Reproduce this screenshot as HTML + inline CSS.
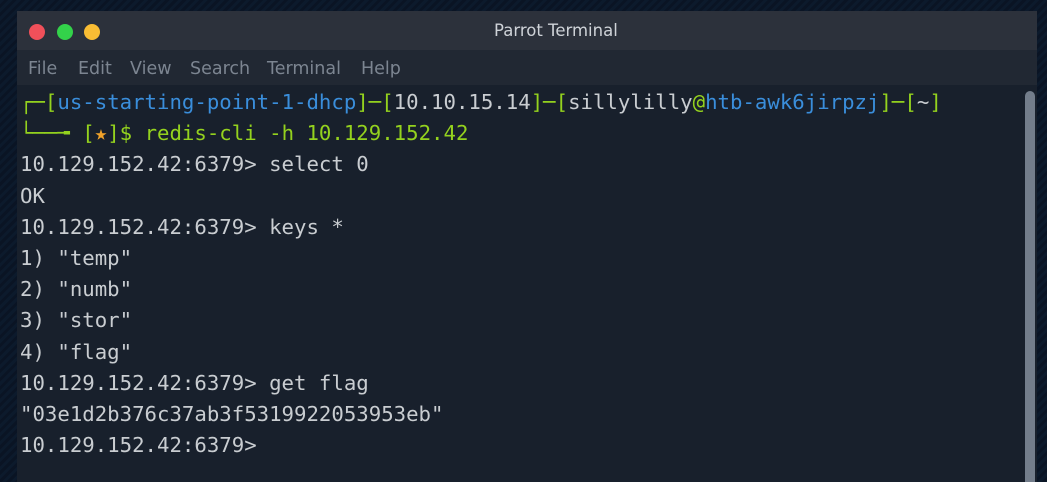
<!DOCTYPE html>
<html><head><meta charset="utf-8"><style>
html,body{margin:0;padding:0;width:1047px;height:482px;overflow:hidden;background:#0b1626;}
body{background:repeating-linear-gradient(135deg,#0c1a2c 0 3px,#0a1424 3px 6px);position:relative;}
.win{position:absolute;left:17px;top:11px;width:1020px;height:471px;background:#18202c;overflow:hidden;}
.title{height:39px;background:#2c313b;position:relative;}
.title span{position:absolute;left:477px;top:10px;color:#cfd3d8;font:16.5px "DejaVu Sans","Liberation Sans",sans-serif;}
.dot{position:absolute;top:13px;width:16px;height:16px;border-radius:50%;}
.menu{height:35px;background:#212833;color:#7c8591;font:17.5px "DejaVu Sans","Liberation Sans",sans-serif;position:relative;}
.menu span{position:absolute;top:9px;}
.term{position:absolute;left:3px;top:76px;font:20.7px "DejaVu Sans Mono","Liberation Mono",monospace;color:#c9cdd1;line-height:31.2px;white-space:pre;}
.g{color:#94d21e}.b{color:#3a8edb}.o{color:#f0a22a}
.sb{position:absolute;left:1008px;top:80px;width:10px;height:391px;background:#737d8b;border-radius:5px 5px 0 0;}
</style></head><body>
<div class="win">
<div class="title"><div class="dot" style="left:12px;background:#f0505a"></div><div class="dot" style="left:40px;background:#33d24a"></div><div class="dot" style="left:67px;background:#f9bd34"></div><span>Parrot Terminal</span></div>
<div class="menu"><span style="left:11px">File</span><span style="left:61px">Edit</span><span style="left:113px">View</span><span style="left:173px">Search</span><span style="left:250px">Terminal</span><span style="left:344px">Help</span></div>
<div class="term"><span class="g">┌─[</span><span class="b">us-starting-point-1-dhcp</span><span class="g">]─[</span>10.10.15.14<span class="g">]─[</span>sillylilly<span class="g">@</span><span class="b">htb-awk6jirpzj</span><span class="g">]─[</span>~<span class="g">]</span>
<span class="g">└──╼ [</span><span class="o">★</span><span class="g">]$ redis-cli -h 10.129.152.42</span>
10.129.152.42:6379&gt; select 0
OK
10.129.152.42:6379&gt; keys *
1) "temp"
2) "numb"
3) "stor"
4) "flag"
10.129.152.42:6379&gt; get flag
"03e1d2b376c37ab3f5319922053953eb"
10.129.152.42:6379&gt; </div>
<div class="sb"></div>
</div>
</body></html>
